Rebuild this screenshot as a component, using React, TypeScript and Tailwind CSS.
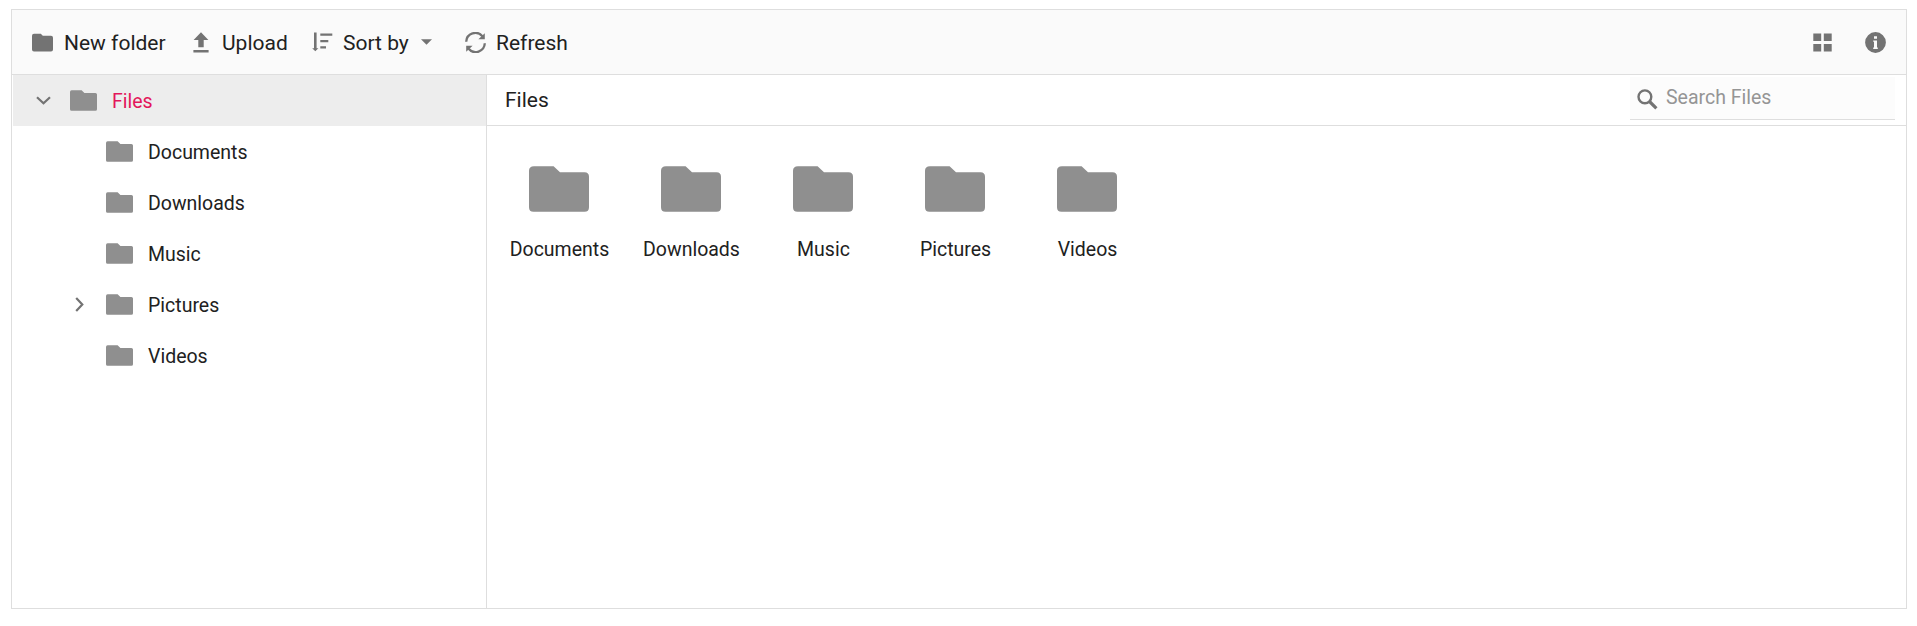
import React from "react";

type IconProps = { className?: string };

const FolderIcon = ({ className }: IconProps) => (
  <svg className={className} viewBox="0 0 27 21" preserveAspectRatio="none" fill="currentColor">
    <path d="M1.6 0.3H11.6L14.4 3H25.4Q27 3 27 4.6V19.2Q27 20.8 25.4 20.8H1.6Q0 20.8 0 19.2V1.9Q0 0.3 1.6 0.3Z" />
  </svg>
);

const LargeFolderIcon = ({ className }: IconProps) => (
  <svg className={className} viewBox="0 0 60 46" fill="currentColor">
    <path d="M5 0.3H24.6L31 6.3H55.5Q60 6.3 60 10.8V41.2Q60 45.7 55.5 45.7H4.5Q0 45.7 0 41.2V4.8Q0 0.3 5 0.3Z" />
  </svg>
);

const ToolbarFolderIcon = ({ className }: IconProps) => (
  <svg className={className} viewBox="0 0 21 19" fill="currentColor">
    <path d="M2 0.8H8.8L10.8 2.8H19Q21 2.8 21 4.8V16.4Q21 18.4 19 18.4H2Q0 18.4 0 16.4V2.8Q0 0.8 2 0.8Z" />
  </svg>
);

const UploadIcon = ({ className }: IconProps) => (
  <svg className={className} viewBox="0 0 16 21" fill="currentColor">
    <path d="M8 0.3L15.4 8H10.7V15.2H5.3V8H0.6ZM0.4 18.1H15.6V20.5H0.4Z" />
  </svg>
);

const SortIcon = ({ className }: IconProps) => (
  <svg className={className} viewBox="0 0 21 20" fill="currentColor">
    <path d="M2 0.4H4.6V16.2H6.4L3.3 19.3L0.2 16.2H2ZM8.3 1.4H20.3V3.8H8.3ZM8.3 7.9H16.3V10.2H8.3ZM8.3 14.2H14V16.5H8.3Z" />
  </svg>
);

const RefreshIcon = ({ className }: IconProps) => (
  <svg className={className} viewBox="0 0 21 21" fill="none" stroke="currentColor" strokeWidth="2.3">
    <path d="M1.2 9.7A9.2 9.2 0 0 1 17.4 4.2M19.8 11.3A9.2 9.2 0 0 1 3.6 16.8" />
    <path d="M19.8 1.2V7.2H13.4ZM1.2 19.8V13.8H7.6Z" fill="currentColor" stroke="none" />
  </svg>
);

const GridIcon = ({ className }: IconProps) => (
  <svg className={className} viewBox="0 0 19 19" fill="currentColor">
    <path d="M0.3 0.5H8.2V8.1H0.3ZM10.8 0.5H18.7V8.1H10.8ZM0.3 10.9H8.2V18.6H0.3ZM10.8 10.9H18.7V18.6H10.8Z" />
  </svg>
);

const InfoIcon = ({ className }: IconProps) => (
  <svg className={className} viewBox="0 0 21 21" fill="currentColor">
    <path
      fillRule="evenodd"
      d="M10.5 0.1A10.4 10.4 0 1 1 10.5 20.9A10.4 10.4 0 1 1 10.5 0.1ZM9 4.2V6.8H12V4.2ZM8.2 8.4V9.8H9V15.6H8.2V17H12.8V15.6H12V8.4Z"
    />
  </svg>
);

const SearchIcon = ({ className }: IconProps) => (
  <svg className={className} viewBox="0 0 21 21" fill="none" stroke="currentColor">
    <circle cx="7.9" cy="7.8" r="6.4" strokeWidth="2.4" />
    <path d="M12.5 12.5L19.4 19.3" strokeWidth="3.2" />
  </svg>
);

const ChevronDown = ({ className }: IconProps) => (
  <svg className={className} viewBox="0 0 15 9" fill="none" stroke="currentColor" strokeWidth="2.2">
    <path d="M1 1.2L7.5 7.2L14 1.2" />
  </svg>
);

const ChevronRight = ({ className }: IconProps) => (
  <svg className={className} viewBox="0 0 9 15" fill="none" stroke="currentColor" strokeWidth="2.2">
    <path d="M1.2 1L7.3 7.5L1.2 14" />
  </svg>
);

const folders = ["Documents", "Downloads", "Music", "Pictures", "Videos"];

export default function App() {
  return (
    <div className="h-[626px] bg-white pt-[9px] pl-[11px] font-['Roboto',sans-serif] text-[19.5px] text-[#212121]">
      <div className="flex h-[600px] w-[1896px] flex-col border border-[#dedede]">
        <header className="flex h-[65px] shrink-0 items-center border-b border-[#dedede] bg-[#fafafa] text-[21px] leading-[30px] whitespace-nowrap">
          <button className="ml-5 flex w-[161px] items-center">
            <ToolbarFolderIcon className="h-[19px] w-[21px] text-[#737373]" />
            <span className="ml-[11px] pt-[2px]">New folder</span>
          </button>
          <button className="flex w-[119px] items-center">
            <UploadIcon className="h-[21px] w-4 text-[#737373]" />
            <span className="ml-[13px] pt-[2px]">Upload</span>
          </button>
          <button className="flex w-[153px] items-center">
            <SortIcon className="h-5 w-[21px] text-[#737373]" />
            <span className="ml-[10px] w-[78px] pt-[2px] text-left">Sort by</span>
            <svg className="h-[6px] w-[11px] text-[#737373]" viewBox="0 0 11 6" fill="currentColor">
              <path d="M0 0.2H11L5.5 5.8Z" />
            </svg>
          </button>
          <button className="flex items-center">
            <RefreshIcon className="h-[21px] w-[21px] text-[#737373]" />
            <span className="ml-[10px] pt-[2px]">Refresh</span>
          </button>
          <div className="mr-5 ml-auto flex items-center gap-[33px] text-[#737373]">
            <GridIcon className="h-[19px] w-[19px]" />
            <InfoIcon className="h-[21px] w-[21px]" />
          </div>
        </header>
        <div className="flex min-h-0 flex-1">
          <nav className="w-[475px] shrink-0 border-r border-[#dedede] pl-px">
            <div className="flex h-[51px] items-center bg-[#ededed] pl-[23px]">
              <ChevronDown className="h-[9px] w-[15px] text-[#737373]" />
              <FolderIcon className="ml-[19px] h-[21px] w-[27px] text-[#8f8f8f]" />
              <span className="ml-[15px] pt-[2px] text-[#e3165b]">Files</span>
            </div>
            {folders.map((name) => (
              <div key={name} className="flex h-[51px] items-center pl-[62px]">
                <div className="w-[31px]">
                  {name === "Pictures" && <ChevronRight className="h-[15px] w-[9px] text-[#737373]" />}
                </div>
                <FolderIcon className="h-[21px] w-[27px] text-[#8f8f8f]" />
                <span className="ml-[15px] pt-[2px]">{name}</span>
              </div>
            ))}
          </nav>
          <main className="min-w-0 flex-1">
            <div className="flex h-[51px] items-start border-b border-[#dedede] pr-[11px] pl-[18px]">
              <span className="pt-[10px] text-[21px] leading-[30px]">Files</span>
              <div className="mt-[2px] ml-auto flex h-[43px] w-[265px] items-start border-b border-[#dedede] bg-[#fcfcfc] pl-[7px]">
                <SearchIcon className="mt-[12px] h-[21px] w-[21px] text-[#737373]" />
                <input
                  aria-label="Search Files"
                  placeholder="Search Files"
                  className="mt-[5px] ml-2 h-[30px] w-[210px] bg-transparent outline-none placeholder:text-[#959595]"
                />
              </div>
            </div>
            <div className="flex pt-[40px] pl-[6px]">
              {folders.map((name) => (
                <div key={name} className="flex w-[132px] flex-col items-center">
                  <LargeFolderIcon className="h-[46px] w-[60px] text-[#8f8f8f]" />
                  <span className="mt-[23px] pl-px leading-[30px]">{name}</span>
                </div>
              ))}
            </div>
          </main>
        </div>
      </div>
    </div>
  );
}
